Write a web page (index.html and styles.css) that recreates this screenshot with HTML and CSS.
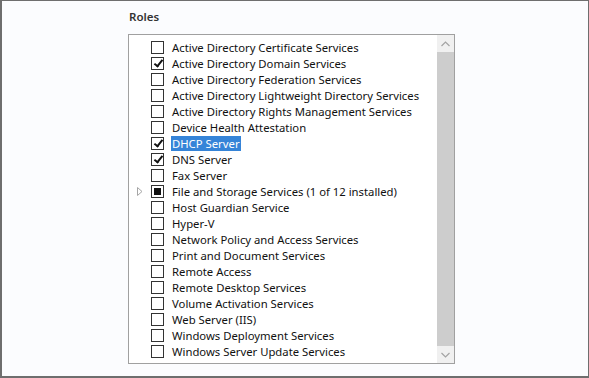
FILE: index.html
```html
<!DOCTYPE html>
<html lang="en">
  <head>
    <meta charset="UTF-8" />
    <title>Roles</title>
    <link rel="stylesheet" href="styles.css">
  </head>
  <body>
    <div class="frame">
      <section class="roles">
        <h2 class="roles-title">Roles</h2>
        <div class="listbox">
          <ul class="role-list">
            <li class="role"><span class="expander"></span><span class="check"></span><span class="label">Active Directory Certificate Services</span></li>
            <li class="role"><span class="expander"></span><span class="check checked"></span><span class="label">Active Directory Domain Services</span></li>
            <li class="role"><span class="expander"></span><span class="check"></span><span class="label">Active Directory Federation Services</span></li>
            <li class="role"><span class="expander"></span><span class="check"></span><span class="label">Active Directory Lightweight Directory Services</span></li>
            <li class="role"><span class="expander"></span><span class="check"></span><span class="label">Active Directory Rights Management Services</span></li>
            <li class="role"><span class="expander"></span><span class="check"></span><span class="label">Device Health Attestation</span></li>
            <li class="role"><span class="expander"></span><span class="check checked"></span><span class="label selected">DHCP Server</span></li>
            <li class="role"><span class="expander"></span><span class="check checked"></span><span class="label">DNS Server</span></li>
            <li class="role"><span class="expander"></span><span class="check"></span><span class="label">Fax Server</span></li>
            <li class="role">
              <span class="expander">
                <svg width="6" height="9" viewBox="0 0 6 9"><path d="M0.5 0.5 L5 4.5 L0.5 8.5 Z" fill="none" stroke="#a6a6a6" stroke-width="1"/></svg>
              </span><span class="check partial"></span><span class="label">File and Storage Services (1 of 12 installed)</span>
            </li>
            <li class="role"><span class="expander"></span><span class="check"></span><span class="label">Host Guardian Service</span></li>
            <li class="role"><span class="expander"></span><span class="check"></span><span class="label">Hyper-V</span></li>
            <li class="role"><span class="expander"></span><span class="check"></span><span class="label">Network Policy and Access Services</span></li>
            <li class="role"><span class="expander"></span><span class="check"></span><span class="label">Print and Document Services</span></li>
            <li class="role"><span class="expander"></span><span class="check"></span><span class="label">Remote Access</span></li>
            <li class="role"><span class="expander"></span><span class="check"></span><span class="label">Remote Desktop Services</span></li>
            <li class="role"><span class="expander"></span><span class="check"></span><span class="label">Volume Activation Services</span></li>
            <li class="role"><span class="expander"></span><span class="check"></span><span class="label">Web Server (IIS)</span></li>
            <li class="role"><span class="expander"></span><span class="check"></span><span class="label">Windows Deployment Services</span></li>
            <li class="role"><span class="expander"></span><span class="check"></span><span class="label">Windows Server Update Services</span></li>
          </ul>
          <div class="scrollbar">
            <div class="scroll-btn">
              <svg width="9" height="6" viewBox="0 0 9 6"><path d="M0.5 5 L4.5 1 L8.5 5" fill="none" stroke="#a3a3a3" stroke-width="1.2"/></svg>
            </div>
            <div class="scroll-thumb"></div>
            <div class="scroll-btn">
              <svg width="9" height="6" viewBox="0 0 9 6"><path d="M0.5 1 L4.5 5 L8.5 1" fill="none" stroke="#a3a3a3" stroke-width="1.2"/></svg>
            </div>
          </div>
        </div>
      </section>
    </div>
  </body>
</html>
```

FILE: styles.css
```css
html,
body {
  margin: 0;
  padding: 0;
  background-color: #fff;
}
.frame {
  box-sizing: border-box;
  width: 589px;
  height: 378px;
  border-top: 1px solid #6e6e6e;
  border-left: 2px solid #6e6e6e;
  border-right: 1px solid #6e6e6e;
  border-bottom: 2px solid #6e6e6e;
  background-color: #fbfcfe;
  font-family: "Noto Sans", sans-serif;
  padding: 8px 0 0 126px;
}
.roles-title {
  margin: 0 0 9px 1px;
  font-size: 11.5px;
  font-weight: 600;
  color: #333;
  line-height: 16px;
}
.listbox {
  display: flex;
  width: 327px;
  height: 330px;
  box-sizing: border-box;
  border: 1px solid #a0a0a0;
  background-color: #fff;
}
.role-list {
  flex: 1;
  list-style: none;
  margin: 0;
  padding: 4px 0 0 0;
}
.role {
  display: flex;
  align-items: center;
  height: 16px;
}
.expander {
  box-sizing: border-box;
  width: 22px;
  height: 16px;
  display: flex;
  align-items: center;
  padding-left: 8px;
}
.check {
  box-sizing: border-box;
  width: 13px;
  height: 13px;
  border: 1px solid #333;
  background-color: #fff;
  margin-right: 7px;
  position: relative;
  flex-shrink: 0;
}
.check.checked::after {
  content: "";
  position: absolute;
  left: 4px;
  top: 0px;
  width: 3px;
  height: 7px;
  border-right: 2px solid #111;
  border-bottom: 2px solid #111;
  transform: rotate(38deg);
}
.check.partial::after {
  content: "";
  position: absolute;
  left: 2px;
  top: 2px;
  width: 7px;
  height: 7px;
  background-color: #111;
}
.label {
  font-size: 11.3px;
  line-height: 15px;
  color: #111;
  white-space: nowrap;
  padding: 0 1px;
}
.label.selected {
  background-color: #3584d8;
  color: #fff;
}
.scrollbar {
  width: 17px;
  display: flex;
  flex-direction: column;
  background-color: #f0f0f0;
}
.scroll-btn {
  height: 17px;
  display: flex;
  align-items: center;
  justify-content: center;
}
.scroll-thumb {
  flex: 1;
  background-color: #cdcdcd;
}
```
